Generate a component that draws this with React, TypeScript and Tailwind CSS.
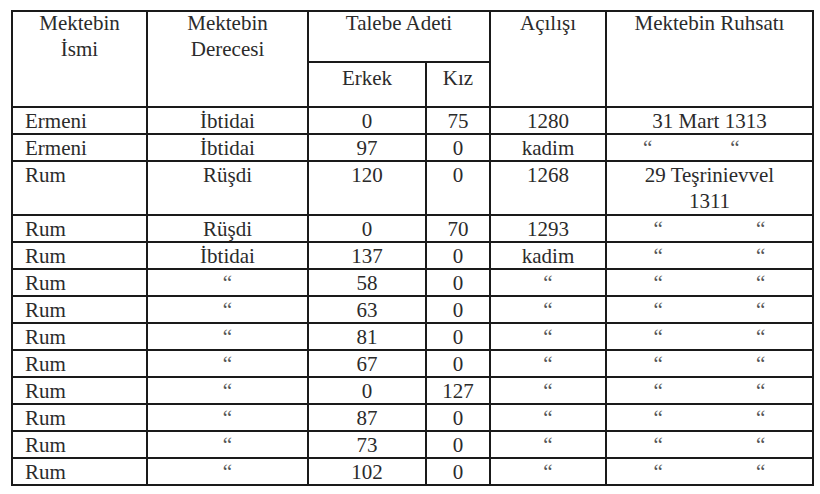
import React from 'react';

type Row = {
  h: string;
  cells: string[];
  ruhsat: React.ReactNode;
};

const Q = '\u201C';

const Quote: React.FC = () => <span className="text-[#555]">{Q}</span>;

const spread = (
  <div className="flex justify-around">
    <Quote />
    <Quote />
  </div>
);

const rows: Row[] = [
  { h: 'h-[26px]', cells: ['Ermeni', 'İbtidai', '0', '75', '1280'], ruhsat: '31 Mart 1313' },
  {
    h: 'h-[27px]',
    cells: ['Ermeni', 'İbtidai', '97', '0', 'kadim'],
    ruhsat: (
      <div className="flex pl-[36px] gap-[78px]">
        <Quote />
        <Quote />
      </div>
    ),
  },
  {
    h: 'h-[54px]',
    cells: ['Rum', 'Rüşdi', '120', '0', '1268'],
    ruhsat: (
      <div className="leading-[26px] -mt-[1px]">
        29 Teşrinievvel
        <br />
        1311
      </div>
    ),
  },
  { h: 'h-[27px]', cells: ['Rum', 'Rüşdi', '0', '70', '1293'], ruhsat: spread },
  { h: 'h-[27px]', cells: ['Rum', 'İbtidai', '137', '0', 'kadim'], ruhsat: spread },
  { h: 'h-[27px]', cells: ['Rum', Q, '58', '0', Q], ruhsat: spread },
  { h: 'h-[27px]', cells: ['Rum', Q, '63', '0', Q], ruhsat: spread },
  { h: 'h-[27px]', cells: ['Rum', Q, '81', '0', Q], ruhsat: spread },
  { h: 'h-[27px]', cells: ['Rum', Q, '67', '0', Q], ruhsat: spread },
  { h: 'h-[26px]', cells: ['Rum', Q, '0', '127', Q], ruhsat: spread },
  { h: 'h-[27px]', cells: ['Rum', Q, '87', '0', Q], ruhsat: spread },
  { h: 'h-[27px]', cells: ['Rum', Q, '73', '0', Q], ruhsat: spread },
  { h: 'h-[27px]', cells: ['Rum', Q, '102', '0', Q], ruhsat: spread },
];

const cell =
  "border-[2px] border-[#1a1a1a] align-top p-0 font-['Liberation_Serif','Times_New_Roman',serif] text-[21px] text-[#2b2b2b] font-normal";

const Text: React.FC<{ value: string }> = ({ value }) =>
  value === Q ? <Quote /> : <>{value}</>;

const Head: React.FC<{ children: React.ReactNode }> = ({ children }) => (
  <div className="leading-[26px] -mt-[2px]">{children}</div>
);

export default function App() {
  return (
    <div className="w-[820px] h-[494px] bg-white pt-[10px] pl-[11px] font-['Liberation_Serif',serif]">
      <table className="border-collapse table-fixed w-[801px]">
        <colgroup>
          <col className="w-[135px]" />
          <col className="w-[161px]" />
          <col className="w-[118px]" />
          <col className="w-[64px]" />
          <col className="w-[116px]" />
          <col className="w-[207px]" />
        </colgroup>
        <thead>
          <tr className="h-[51px]">
            <th rowSpan={2} className={`${cell} text-center`}>
              <Head>
                Mektebin
                <br />
                İsmi
              </Head>
            </th>
            <th rowSpan={2} className={`${cell} text-center`}>
              <Head>
                Mektebin
                <br />
                Derecesi
              </Head>
            </th>
            <th colSpan={2} className={`${cell} text-center`}>
              <Head>Talebe Adeti</Head>
            </th>
            <th rowSpan={2} className={`${cell} text-center`}>
              <Head>Açılışı</Head>
            </th>
            <th rowSpan={2} className={`${cell} text-center`}>
              <Head>Mektebin Ruhsatı</Head>
            </th>
          </tr>
          <tr className="h-[45px]">
            <th className={`${cell} leading-[26px] text-center pt-[2px]`}>Erkek</th>
            <th className={`${cell} leading-[26px] text-center pt-[2px]`}>Kız</th>
          </tr>
        </thead>
        <tbody>
          {rows.map((r, i) => (
            <tr key={i} className={r.h}>
              <td className={`${cell} leading-[24px] pt-[1px] pl-3 text-left`}>{r.cells[0]}</td>
              {r.cells.slice(1).map((c, j) => (
                <td key={j} className={`${cell} leading-[24px] pt-[1px] text-center`}>
                  <Text value={c} />
                </td>
              ))}
              <td className={`${cell} leading-[24px] pt-[1px] text-center`}>{r.ruhsat}</td>
            </tr>
          ))}
        </tbody>
      </table>
    </div>
  );
}
